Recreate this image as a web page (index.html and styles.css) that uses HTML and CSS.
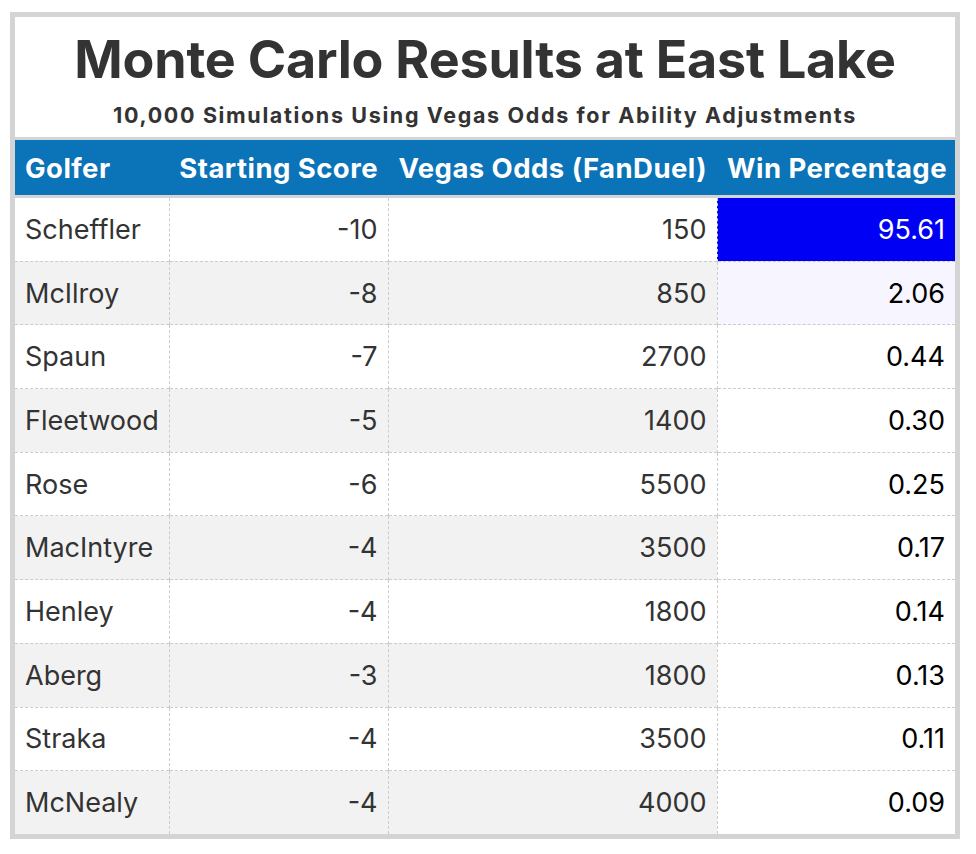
FILE: index.html
```html
<!DOCTYPE html>
<html>
<head>
<meta charset="utf-8">
<link rel="stylesheet" href="styles.css">
</head>
<body>
<div class="card">
  <div class="heading">
    <h1 class="title">Monte Carlo Results at East Lake</h1>
    <p class="subtitle">10,000 Simulations Using Vegas Odds for Ability Adjustments</p>
  </div>
  <table class="results">
    <colgroup>
      <col class="c1"><col class="c2"><col class="c3"><col class="c4">
    </colgroup>
    <thead>
      <tr>
        <th class="left">Golfer</th>
        <th>Starting Score</th>
        <th>Vegas Odds (FanDuel)</th>
        <th>Win Percentage</th>
      </tr>
    </thead>
    <tbody>
      <tr><td class="left">Scheffler</td><td>-10</td><td>150</td><td class="pct top">95.61</td></tr>
      <tr><td class="left">McIlroy</td><td>-8</td><td>850</td><td class="pct tint">2.06</td></tr>
      <tr><td class="left">Spaun</td><td>-7</td><td>2700</td><td class="pct">0.44</td></tr>
      <tr><td class="left">Fleetwood</td><td>-5</td><td>1400</td><td class="pct">0.30</td></tr>
      <tr><td class="left">Rose</td><td>-6</td><td>5500</td><td class="pct">0.25</td></tr>
      <tr><td class="left">MacIntyre</td><td>-4</td><td>3500</td><td class="pct">0.17</td></tr>
      <tr><td class="left">Henley</td><td>-4</td><td>1800</td><td class="pct">0.14</td></tr>
      <tr><td class="left">Aberg</td><td>-3</td><td>1800</td><td class="pct">0.13</td></tr>
      <tr><td class="left">Straka</td><td>-4</td><td>3500</td><td class="pct">0.11</td></tr>
      <tr><td class="left">McNealy</td><td>-4</td><td>4000</td><td class="pct">0.09</td></tr>
    </tbody>
  </table>
</div>
</body>
</html>
```
FILE: styles.css
```css
html, body {
  margin: 0;
  padding: 0;
  background: #ffffff;
}
body {
  font-family: Inter, "Liberation Sans", sans-serif;
  color: #333333;
}
.card {
  margin: 12px 0 0 10px;
  width: 940px;
  border: 5px solid #d4d4d4;
  background: #ffffff;
}
.heading {
  height: 123px;
  display: flex;
  flex-direction: column;
  align-items: center;
  border-bottom: 3px solid #d4d4d4;
  box-sizing: border-box;
}
.title {
  margin: 13px 0 0;
  font-size: 52px;
  line-height: 60px;
  font-weight: 700;
  color: #333333;
  letter-spacing: -0.2px;
}
.subtitle {
  margin: 12px 0 0;
  font-size: 21.5px;
  line-height: 26px;
  font-weight: 700;
  color: #333333;
  letter-spacing: 1.65px;
}
.results {
  width: 940px;
  border-collapse: collapse;
  table-layout: fixed;
}
.c1 { width: 154px; }
.c2 { width: 219px; }
.c3 { width: 329px; }
.c4 { width: 238px; }
.results th {
  background: #0b73b8;
  color: #ffffff;
  font-size: 27.5px;
  font-weight: 700;
  height: 55px;
  padding: 0 10px;
  text-align: right;
  border-bottom: 3px solid #d4d4d4;
  white-space: nowrap;
  letter-spacing: 0.45px;
}
.results th.left, .results td.left {
  text-align: left;
}
.results td {
  height: 62.7px;
  padding: 0 10px;
  font-size: 27px;
  text-align: right;
  color: #333333;
  border-left: 1px dashed #cccccc;
  border-top: 1px dashed #cccccc;
  white-space: nowrap;
}
.results tbody tr:first-child td {
  border-top: none;
}
.results td:first-child {
  border-left: none;
}
.results tbody tr:nth-child(even) td {
  background: #f2f2f2;
}
.results tbody tr td.pct {
  background: #ffffff;
  color: #000000;
}
.results tbody tr td.pct.top {
  background: #0000f5;
  color: #ffffff;
}
.results tbody tr td.pct.tint {
  background: #f7f5ff;
}
```
